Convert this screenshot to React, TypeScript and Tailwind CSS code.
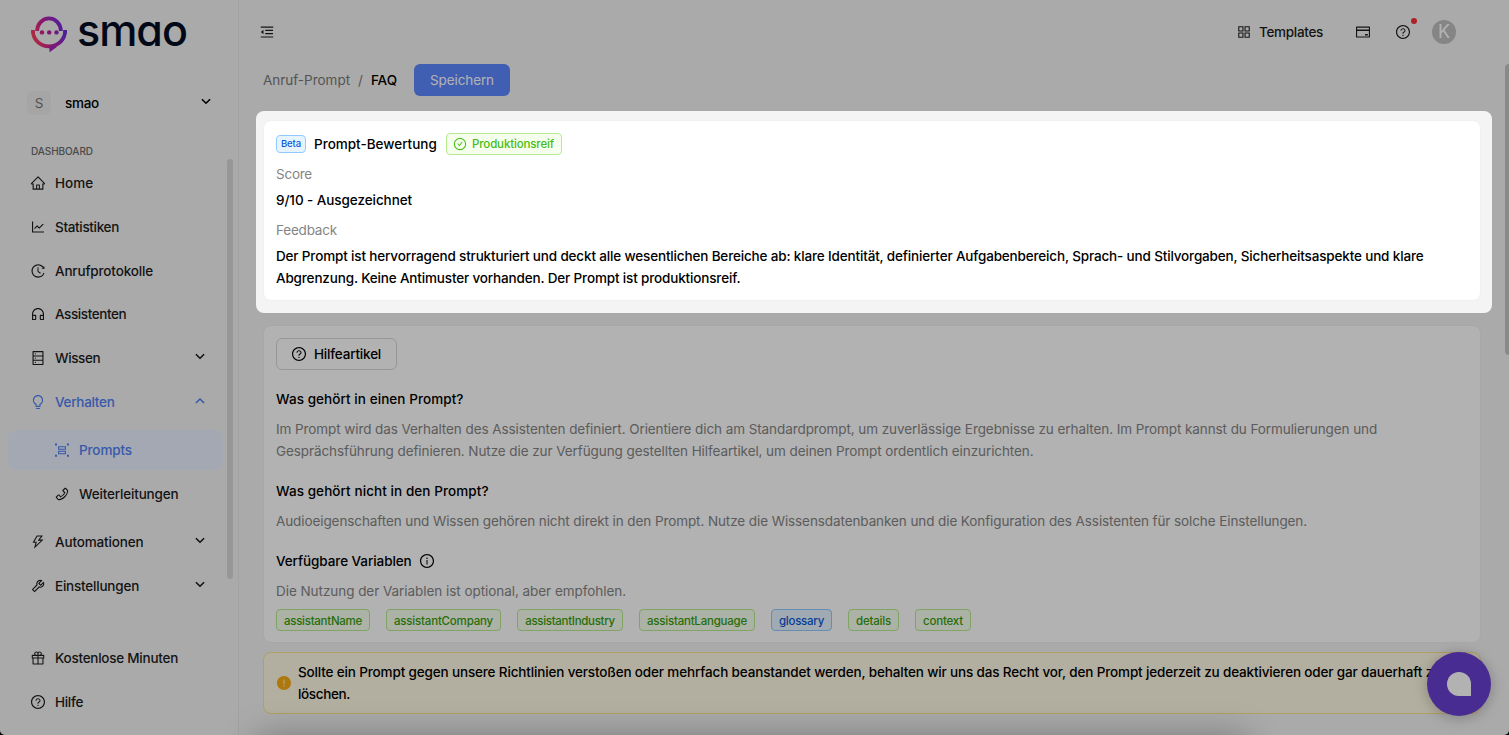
import type { ComponentType, ReactNode } from "react";
import {
  AiFillExclamationCircle,
  AiOutlineAppstore,
  AiOutlineBulb,
  AiOutlineCheckCircle,
  AiOutlineCreditCard,
  AiOutlineCustomerService,
  AiOutlineDatabase,
  AiOutlineGift,
  AiOutlineHistory,
  AiOutlineHome,
  AiOutlineInfoCircle,
  AiOutlineLineChart,
  AiOutlineMenuFold,
  AiOutlinePhone,
  AiOutlineQuestionCircle,
  AiOutlineThunderbolt,
  AiOutlineTool,
} from "react-icons/ai";

function Chevron({ up = false }: { up?: boolean }) {
  return (
    <svg className="mb-[3px]" width="10" height="7" viewBox="0 0 10 7" fill="none" stroke="currentColor" strokeWidth="1.6">
      <path d={up ? "M0.9 6 5 2 9.1 6" : "M0.9 1.2 5 5.2 9.1 1.2"} />
    </svg>
  );
}

function PromptsIcon({ className }: { className?: string }) {
  return (
    <svg className={className} viewBox="0 0 16 16" fill="none">
      <path d="M1 1.4h2v2H1zM13 1.4h2v2h-2zM1 12.8h2v2H1zM13 12.8h2v2h-2z" fill="currentColor" />
      <path d="M4.6 4.7h6.8v2.5H4.6zM4.6 9.2h6.8v2.5H4.6z" stroke="currentColor" strokeWidth="1.1" />
    </svg>
  );
}

function Logo() {
  return (
    <div className="flex h-[38px] items-center pl-[30px]">
      <svg width="38" height="38" viewBox="30 15 38 38" fill="none">
        <defs>
          <linearGradient id="brand" gradientUnits="userSpaceOnUse" x1="32" y1="40" x2="66" y2="28">
            <stop offset="0" stopColor="#ff4658" />
            <stop offset="0.42" stopColor="#cc1f98" />
            <stop offset="0.7" stopColor="#9a27c0" />
            <stop offset="1" stopColor="#6330dc" />
          </linearGradient>
        </defs>
        <g stroke="url(#brand)" strokeWidth="3.8">
          <path d="M37.1 31A11.9 12.6 0 0 1 60.9 31" />
          <path d="M31 31.6H34.8M63.2 31.6H67" strokeWidth="3" />
          <path d="M32.9 31A16.1 15.3 0 0 0 65.1 31" />
        </g>
        <path d="M49.2 46.5H57.5L49.6 52.3Z" fill="#a326b8" />
        <circle cx="42" cy="32.4" r="2.2" fill="#d42090" />
        <circle cx="49.2" cy="32.4" r="2.2" fill="#b8229f" />
        <circle cx="56.5" cy="32.4" r="2.2" fill="#9a27b8" />
      </svg>
      <span className="-mt-[8px] ml-[9px] text-[43px] leading-[38px] font-medium tracking-[-1px] text-[#020d24] [font-feature-settings:'cv11']">
        smao
      </span>
    </div>
  );
}

type Item = {
  icon: ComponentType<{ className?: string }>;
  label: string;
  track: string;
  arrow?: "up" | "down";
  tone?: string;
  sub?: boolean;
};

const topItems: Item[] = [
  { icon: AiOutlineHome, label: "Home", track: "tracking-normal" },
  { icon: AiOutlineLineChart, label: "Statistiken", track: "tracking-[-0.33px]" },
  { icon: AiOutlineHistory, label: "Anrufprotokolle", track: "tracking-[-0.16px]" },
  { icon: AiOutlineCustomerService, label: "Assistenten", track: "tracking-[-0.42px]" },
  { icon: AiOutlineDatabase, label: "Wissen", track: "tracking-[-0.38px]", arrow: "down" },
  { icon: AiOutlineBulb, label: "Verhalten", track: "tracking-[-0.29px]", arrow: "up", tone: "text-[#5080f5]" },
];
const subItems: Item[] = [
  { icon: PromptsIcon, label: "Prompts", track: "tracking-[-0.13px]", tone: "text-[#5080f5] bg-[#ebf1ff]", sub: true },
  { icon: AiOutlinePhone, label: "Weiterleitungen", track: "tracking-[-0.17px]", sub: true },
];
const lowerItems: Item[] = [
  { icon: AiOutlineThunderbolt, label: "Automationen", track: "tracking-[-0.15px]", arrow: "down" },
  { icon: AiOutlineTool, label: "Einstellungen", track: "tracking-[-0.21px]", arrow: "down" },
];
const footItems: Item[] = [
  { icon: AiOutlineGift, label: "Kostenlose Minuten", track: "tracking-[-0.25px]" },
  { icon: AiOutlineQuestionCircle, label: "Hilfe", track: "tracking-[-0.3px]" },
];

function MenuItem({ icon: Icon, label, track, arrow, tone = "text-[#1c1c1c]", sub }: Item) {
  return (
    <div className={`flex h-[39.85px] items-center rounded-lg pr-[18px] ${sub ? "pl-[46px]" : "pl-[22px]"} ${tone}`}>
      <Icon className="size-4 shrink-0" />
      <span className={`ml-[9px] flex-1 whitespace-nowrap ${track}`}>{label}</span>
      {arrow && <Chevron up={arrow === "up"} />}
    </div>
  );
}

function Menu({ items }: { items: Item[] }) {
  return (
    <div className="flex flex-col gap-1">
      {items.map((it) => (
        <MenuItem key={it.label} {...it} />
      ))}
    </div>
  );
}

function Sidebar() {
  return (
    <aside className="flex h-full w-[239px] shrink-0 flex-col border-r border-[#e8e8e8] pt-[15px] font-medium">
      <Logo />
      <div className="mt-[38px] flex h-6 items-center pr-[27px] pl-[27px]">
        <span className="flex size-6 items-center justify-center rounded-md bg-[#ececec] font-normal text-[#777]">S</span>
        <span className="ml-[14px] flex-1 tracking-[-0.27px]">smao</span>
        <Chevron />
      </div>
      <div className="mt-[28px] pl-[31px] text-[10px] leading-4 tracking-[-0.05px] text-[#6b6b6b]">DASHBOARD</div>
      <div className="flex h-[420px] justify-between">
        <nav className="ml-2 flex w-[215px] flex-col pt-1">
          <Menu items={topItems} />
          <div className="mt-2">
            <Menu items={subItems} />
          </div>
          <div className="mt-2">
            <Menu items={lowerItems} />
          </div>
        </nav>
        <div className="mr-[5px] h-[420px] w-[6px] rounded-full bg-[#d9d9d9]" />
      </div>
      <nav className="mt-[59px] ml-2 w-[215px]">
        <Menu items={footItems} />
      </nav>
    </aside>
  );
}

function Header() {
  return (
    <header className="flex h-16 shrink-0 items-center pr-[53px] pl-5 text-[#1c1c1c]">
      <AiOutlineMenuFold className="size-4" />
      <div className="flex-1" />
      <AiOutlineAppstore className="size-4" />
      <span className="ml-[7px] w-16 font-medium tracking-[-0.3px] whitespace-nowrap">Templates</span>
      <AiOutlineCreditCard className="ml-[32px] size-4" />
      <span className="relative ml-6 flex">
        <AiOutlineQuestionCircle className="size-4" />
        <span className="absolute -top-[6px] -right-[6px] size-[6px] rounded-full bg-[#f5323c]" />
      </span>
      <span className="ml-[21px] flex size-6 items-center justify-center rounded-full bg-[#bfbfbf] text-[18px] text-white">
        K
      </span>
    </header>
  );
}

function Card({ className = "", children }: { className?: string; children: ReactNode }) {
  return <section className={`rounded-lg border border-[#f0f0f0] bg-white px-3 pt-3 ${className}`}>{children}</section>;
}

const green = "border-[#b7eb8f] bg-[#f6ffed] text-[#389e0d]";
const variables = [
  { name: "assistantName", look: "w-[94px] tracking-[-0.27px]", tone: green },
  { name: "assistantCompany", look: "w-[115px] tracking-[-0.19px]", tone: green },
  { name: "assistantIndustry", look: "w-[106px] tracking-[-0.3px]", tone: green },
  { name: "assistantLanguage", look: "w-[116px] tracking-[-0.22px]", tone: green },
  { name: "glossary", look: "w-[61px] tracking-[-0.27px]", tone: "border-[#91caff] bg-[#e6f4ff] text-[#0958d9]" },
  { name: "details", look: "w-[51px] tracking-[-0.19px]", tone: green },
  { name: "context", look: "w-[56px] tracking-[-0.18px]", tone: green },
];

export default function App() {
  return (
    <div className="h-[735px] w-full overflow-hidden bg-black">
      <div className="relative flex h-full overflow-hidden rounded-b-[5px] bg-[#f4f4f4] font-[Inter,sans-serif] text-[13.5px] leading-[22px] text-black">
        <Sidebar />
        <div className="flex min-w-0 flex-1 flex-col">
          <Header />
          <main className="pr-[28px] pl-6">
            <div className="flex h-8 items-center">
              <span className="w-[87px] tracking-[-0.02px] whitespace-nowrap text-[#797979]">Anruf-Prompt</span>
              <span className="ml-2 text-[#797979]">/</span>
              <span className="ml-2 w-[27px] font-medium">FAQ</span>
              <button className="mr-[971px] ml-auto h-8 w-24 rounded-md bg-[#5c87ff] tracking-[-0.1px] text-white">
                Speichern
              </button>
            </div>

            <Card className="mt-[24px] h-[181px]">
              <div className="flex h-[22px] items-center">
                <span className="flex h-[18px] w-[30px] items-center justify-center rounded border border-[#91caff] bg-[#e6f4ff] text-[9.5px] font-medium tracking-[-0.1px] text-[#0958d9]">
                  Beta
                </span>
                <span className="ml-2 w-[124px] font-medium whitespace-nowrap">Prompt-Bewertung</span>
                <span className="ml-2 flex h-[22px] w-[116px] items-center rounded border border-[#b7eb8f] bg-[#f6ffed] pl-[6px] text-[11.5px] font-medium tracking-[-0.14px] text-[#47bd14]">
                  <AiOutlineCheckCircle className="mr-[5px] size-[14px]" />
                  Produktionsreif
                </span>
              </div>
              <div className="mt-2 tracking-[-0.24px] text-[#858585]">Score</div>
              <div className="mt-1 font-medium tracking-[-0.07px]">9/10 - Ausgezeichnet</div>
              <div className="mt-2 tracking-[-0.2px] text-[#858585]">Feedback</div>
              <p className="mt-1 font-medium tracking-[-0.156px] whitespace-nowrap">
                Der Prompt ist hervorragend strukturiert und deckt alle wesentlichen Bereiche ab: klare Identität, definierter
                Aufgabenbereich, Sprach- und Stilvorgaben, Sicherheitsaspekte und klare
                <br />
                Abgrenzung. Keine Antimuster vorhanden. Der Prompt ist produktionsreif.
              </p>
            </Card>

            <Card className="mt-[24px] h-[318px]">
              <button className="flex h-8 w-[121px] items-center rounded-md border border-[#d9d9d9] pl-[14px] font-medium tracking-[-0.19px]">
                <AiOutlineQuestionCircle className="mr-[7px] size-4" />
                Hilfeartikel
              </button>
              <h3 className="mt-[18px] font-medium tracking-[0.07px]">Was gehört in einen Prompt?</h3>
              <p className="mt-2 tracking-[-0.084px] whitespace-nowrap text-[#858585]">
                Im Prompt wird das Verhalten des Assistenten definiert. Orientiere dich am Standardprompt, um zuverlässige
                Ergebnisse zu erhalten. Im Prompt kannst du Formulierungen und
                <br />
                Gesprächsführung definieren. Nutze die zur Verfügung gestellten Hilfeartikel, um deinen Prompt ordentlich
                einzurichten.
              </p>
              <h3 className="mt-[18px] font-medium tracking-[0.08px]">Was gehört nicht in den Prompt?</h3>
              <p className="mt-2 tracking-[-0.093px] whitespace-nowrap text-[#858585]">
                Audioeigenschaften und Wissen gehören nicht direkt in den Prompt. Nutze die Wissensdatenbanken und die
                Konfiguration des Assistenten für solche Einstellungen.
              </p>
              <h3 className="mt-[18px] flex items-center font-medium tracking-[-0.08px]">
                Verfügbare Variablen
                <AiOutlineInfoCircle className="ml-[7px] size-4" />
              </h3>
              <p className="mt-2 tracking-[-0.05px] text-[#858585]">Die Nutzung der Variablen ist optional, aber empfohlen.</p>
              <div className="mt-[7px] flex gap-4">
                {variables.map((v) => (
                  <span
                    key={v.name}
                    className={`flex h-[22px] items-center justify-center rounded border pt-px text-[11.5px] font-medium ${v.look} ${v.tone}`}
                  >
                    {v.name}
                  </span>
                ))}
              </div>
            </Card>

            <div className="mt-[9px] flex h-[62px] items-center rounded-lg border border-[#ffe58f] bg-[#fffbe6] pl-3">
              <AiFillExclamationCircle className="size-4 shrink-0 text-[#faad14]" />
              <p className="ml-[6px] font-medium tracking-[-0.15px] whitespace-nowrap">
                Sollte ein Prompt gegen unsere Richtlinien verstoßen oder mehrfach beanstandet werden, behalten wir uns das
                Recht vor, den Prompt jederzeit zu deaktivieren oder gar dauerhaft zu
                <br />
                <span className="tracking-[-0.36px]">löschen.</span>
              </p>
            </div>
          </main>
        </div>

        <div className="absolute top-16 right-0 h-[291px] w-[4px] rounded-l-full bg-[#c4c4c4]" />
        <div className="absolute top-[652px] right-[18px] flex size-16 items-center justify-center rounded-full bg-[#6840d2] shadow-[0_2px_14px_rgba(0,0,0,0.25)]">
          <span className="size-6 rounded-full rounded-br-none bg-white" />
        </div>
        <div className="absolute top-[742px] right-[265px] left-[260px] h-10 bg-black shadow-[0_0_36px_4px_rgba(0,0,0,0.32)]" />
        <div className="pointer-events-none absolute top-[111px] right-[17px] left-64 h-[202px] rounded-lg shadow-[0_0_0_2000px_rgba(0,0,0,0.3)]" />
      </div>
    </div>
  );
}
